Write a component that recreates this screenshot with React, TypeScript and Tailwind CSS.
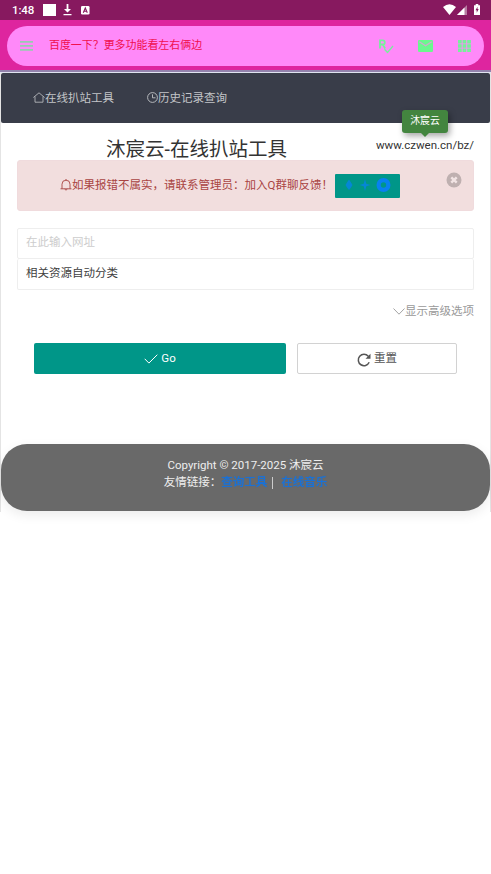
import type { ReactNode } from "react";

function StatusBar() {
  return (
    <div className="flex h-5 items-center bg-[#87195f] pl-[12px] pr-[11px] text-white">
      <span className="mt-px w-[31px] text-[11.5px] font-medium leading-none tracking-[-0.1px]">1:48</span>
      <span className="h-3 w-[13px] bg-white" />
      <svg className="ml-[7px]" width="9" height="12" viewBox="0 0 9 12" fill="currentColor">
        <path d="M3.6 0h1.8v5H8L4.5 8.6 1 5h2.6zM.5 10h8v1.3h-8z" />
      </svg>
      <svg className="ml-[9px]" width="9" height="9" viewBox="0 0 9 9">
        <rect width="8.500" height="8.500" rx="1.3" fill="#fff" />
        <path d="M2.3 6.800 4.300 2 6.300 6.800M3.2 5.300h2.2" stroke="#87195f" strokeWidth="1.1" fill="none" />
      </svg>
      <svg className="mb-px ml-auto" width="13" height="11" viewBox="0 0 13 11" fill="currentColor">
        <path d="M0 3Q6.500-2.300 13 3L6.500 11z" />
      </svg>
      <svg className="ml-[1px]" width="10" height="10" viewBox="0 0 10 10">
        <path d="M10 0v10H0z" fill="#b77ba2" />
        <path d="M7.500 2.500V10H0z" fill="#fff" />
      </svg>
      <svg className="mb-px ml-[7px]" width="6" height="11" viewBox="0 0 6 11">
        <path d="M0 1.200h1.700V0h2.600v1.200H6V11H0z" fill="#fff" />
        <path d="M3.500 2.800 1.500 6.300h1.200v2.500l2-3.700H3.500z" fill="#87195f" />
      </svg>
    </div>
  );
}

function SearchBar() {
  return (
    <div className="h-[50px] bg-[#de259f] px-[7px] pt-[6px]">
      <div className="flex h-10 items-center rounded-full bg-[#ff89f9] pl-[13px] pr-[13px] text-[#77f09b]">
        <svg className="mb-px" width="13" height="10" viewBox="0 0 13 10" fill="#97cbb0">
          <path d="M0 0h13v1.700H0zM0 4h13v1.700H0zM0 8h13v1.700H0z" />
        </svg>
        <span className="ml-4 text-[10.95px] text-[#f0104f]">百度一下？更多功能看左右俩边</span>
        <svg className="ml-auto" width="16" height="15" viewBox="0 0 16 15" fill="none" stroke="currentColor">
          <path d="M2 9.500V1.300h2.700a2 2 0 0 1 0 4.200H2M4.700 5.500l2.500 4" strokeWidth="1.800" />
          <path d="m6.500 10.200 3 3.300L15 7" strokeWidth="1.300" />
        </svg>
        <svg className="ml-[24px]" width="15" height="12" viewBox="0 0 15 12">
          <rect width="15" height="12" rx="1.200" fill="#6bf78e" />
          <path d="m1.300 1.800 6.200 4 6.200-4" stroke="#d2a9d0" strokeWidth="1.300" fill="none" />
        </svg>
        <svg className="ml-[25px]" width="13" height="12" viewBox="0 0 13 12" fill="currentColor">
          <path d="M0 0h3.700v3.400H0zM4.600 0h3.700v3.400H4.600zM9.200 0h3.700v3.400H9.200zM0 4.300h3.700v3.400H0zM4.600 4.300h3.700v3.400H4.600zM9.200 4.300h3.700v3.400H9.200zM0 8.600h3.700V12H0zM4.600 8.600h3.700V12H4.600zM9.200 8.600h3.700V12H9.200z" />
        </svg>
      </div>
    </div>
  );
}

function NavItem({ icon, label }: { icon: ReactNode; label: string }) {
  return (
    <a className="flex items-center">
      {icon}
      <span className="mt-px">{label}</span>
    </a>
  );
}

function Nav() {
  return (
    <nav className="flex h-[50px] items-center gap-[33px] rounded-[2px] bg-[#393d49] pl-8 text-[11.5px] text-[#c3c5c8]">
      <NavItem
        label="在线扒站工具"
        icon={
          <svg className="mb-0.5" width="12" height="11" viewBox="0 0 12 11" fill="none" stroke="currentColor" strokeWidth="0.8">
            <path d="M.4 5.500 6 .8l5.600 4.700M2 4.500v5.700h8V4.500" />
          </svg>
        }
      />
      <NavItem
        label="历史记录查询"
        icon={
          <svg className="mb-0.5" width="11" height="11" viewBox="0 0 11 11" fill="none" stroke="currentColor" strokeWidth="0.9">
            <circle cx="5.500" cy="5.500" r="4.900" />
            <path d="M5.500 2.300v3.500h3" />
          </svg>
        }
      />
    </nav>
  );
}

function Alert() {
  return (
    <div className="flex h-[51px] rounded-[3px] border border-[#f0dbdd] bg-[#f2dede] pl-[42px] pr-[11px] text-[#a94442]">
      <div className="flex flex-1 items-center">
        <svg className="mb-0.5" width="12" height="12" viewBox="0 0 12 12" fill="none" stroke="currentColor" strokeWidth="0.9">
          <path d="M.5 9.800h11M2 9.800V5.200a4 4 0 0 1 8 0v4.600M6 0v1.300M4.700 10.200q1.300 1.800 2.600 0" />
        </svg>
        <span className="w-[263px] whitespace-nowrap text-[11.5px]">如果报错不属实，请联系管理员：加入Q群聊反馈！</span>
        <a className="flex h-6 w-[65px] items-center rounded-[1px] bg-[#009688] pl-[10px]">
          <svg className="mb-0.5" width="46" height="16" viewBox="0 0 46 16" fill="#0781f0">
            <path d="M4 2.500 6 5.500 7.500 8 6 10.500 4 13 2 10.500.5 8 2 5.500z" opacity=".75" />
            <path d="m20 2 1.300 4.700L25.500 8l-4.200 1.300L20 14l-1.300-4.700L14.500 8l4.200-1.300z" opacity=".75" />
            <path fillRule="evenodd" d="M38.500 1a7 7 0 1 0 0 14 7 7 0 0 0 0-14zm0 4.300a2.700 2.700 0 1 1 0 5.400 2.700 2.700 0 0 1 0-5.400z" />
          </svg>
        </a>
      </div>
      <svg className="mt-[11px]" width="16" height="16" viewBox="0 0 16 16">
        <circle cx="8" cy="8" r="7.500" fill="#bfb0b0" />
        <path d="m5.300 5.300 5.400 5.400m0-5.400-5.400 5.400" stroke="#f2e4e4" strokeWidth="2.400" />
      </svg>
    </div>
  );
}

function Form() {
  return (
    <div className="mt-[17px] text-[11.5px]">
      <div className="flex h-[31px] items-center rounded-[2px] border border-[#eeeeee] pb-px pl-2 text-[#cdcdcd]">在此输入网址</div>
      <div className="flex h-[31px] items-center rounded-[2px] border border-t-0 border-[#eeeeee] pl-2 text-[#404040]">相关资源自动分类</div>
      <div className="mt-[13px] flex h-[18px] items-center justify-end text-[#999]">
        <svg className="mb-0.5" width="12" height="7" viewBox="0 0 12 7" fill="none" stroke="currentColor" strokeWidth="0.9">
          <path d="m.5.500 5.500 5.700L11.500.500" />
        </svg>
        <span>显示高级选项</span>
      </div>
      <div className="mt-[22px] flex gap-[11px] px-[17px]">
        <button className="flex h-[31px] w-[252px] items-center justify-center gap-[3px] rounded-[2px] bg-[#009688] text-white">
          <svg width="14" height="10" viewBox="0 0 14 10" fill="none" stroke="currentColor" strokeWidth="1">
            <path d="m.7 4.800 4.200 4.300L13.300.700" />
          </svg>
          <span className="text-[11.5px]">Go</span>
        </button>
        <button className="flex h-[31px] flex-1 items-center justify-center gap-[3px] rounded-[2px] border border-[#d2d2d2] text-[#555]">
          <svg className="mt-0.5" width="14" height="14" viewBox="0 0 14 14" fill="none" stroke="currentColor" strokeWidth="1.500">
            <path d="M12.200 9.300A5.700 5.700 0 1 1 11.300 3.200" />
            <path d="M13.500.8v5H8.500z" fill="currentColor" stroke="none" />
          </svg>
          <span>重置</span>
        </button>
      </div>
    </div>
  );
}

function Footer() {
  return (
    <footer className="mt-[70px] h-[67px] rounded-[26px] bg-[#696969] pt-[13px] text-center text-[11.5px] leading-[17px] text-[#eee] shadow-[0_4px_12px_rgba(0,0,0,0.08)]">
      <p>Copyright © 2017-2025 沐宸云</p>
      <p className="flex justify-center">
        <span>友情链接：</span>
        <a className="text-[#1672dc] blur-[0.7px] [text-shadow:0_0_1px_#1672dc]">查询工具</a>
        <span className="ml-[5px] mr-[8px] mt-[3px] h-3 w-px bg-[#ccc]" />
        <a className="text-[#1672dc] blur-[0.7px] [text-shadow:0_0_1px_#1672dc]">在线音乐</a>
      </p>
    </footer>
  );
}

export default function App() {
  return (
    <div className="min-h-[874px] w-full bg-white font-[Roboto,'Noto_Sans_CJK_SC',sans-serif]">
      <StatusBar />
      <SearchBar />
      <div className="h-[3px] border-b border-[#dfe3ef] bg-[#9382ac]" />
      <main className="h-[439px] border-x border-[#e4e4e4]">
        <Nav />
        <div className="px-4">
          <header className="relative flex h-[37px] justify-between">
            <h1 className="ml-[89px] mt-[12px] text-[19.5px] leading-[30px] text-[#333]">沐宸云-在线扒站工具</h1>
            <span className="mt-[14px] text-[11.5px] leading-4 text-[#333]">www.czwen.cn/bz/</span>
            <div className="absolute -top-[13px] right-[26px] flex h-[23px] w-[46px] items-center justify-center rounded-[3px] bg-[#43853f] text-[9.8px] text-white shadow-[2px_3px_6px_rgba(0,0,0,0.35)]">
              沐宸云
              <span className="absolute -bottom-[4px] left-[19px] border-x-4 border-t-4 border-x-transparent border-t-[#43853f]" />
            </div>
          </header>
          <Alert />
          <Form />
        </div>
        <Footer />
      </main>
    </div>
  );
}
